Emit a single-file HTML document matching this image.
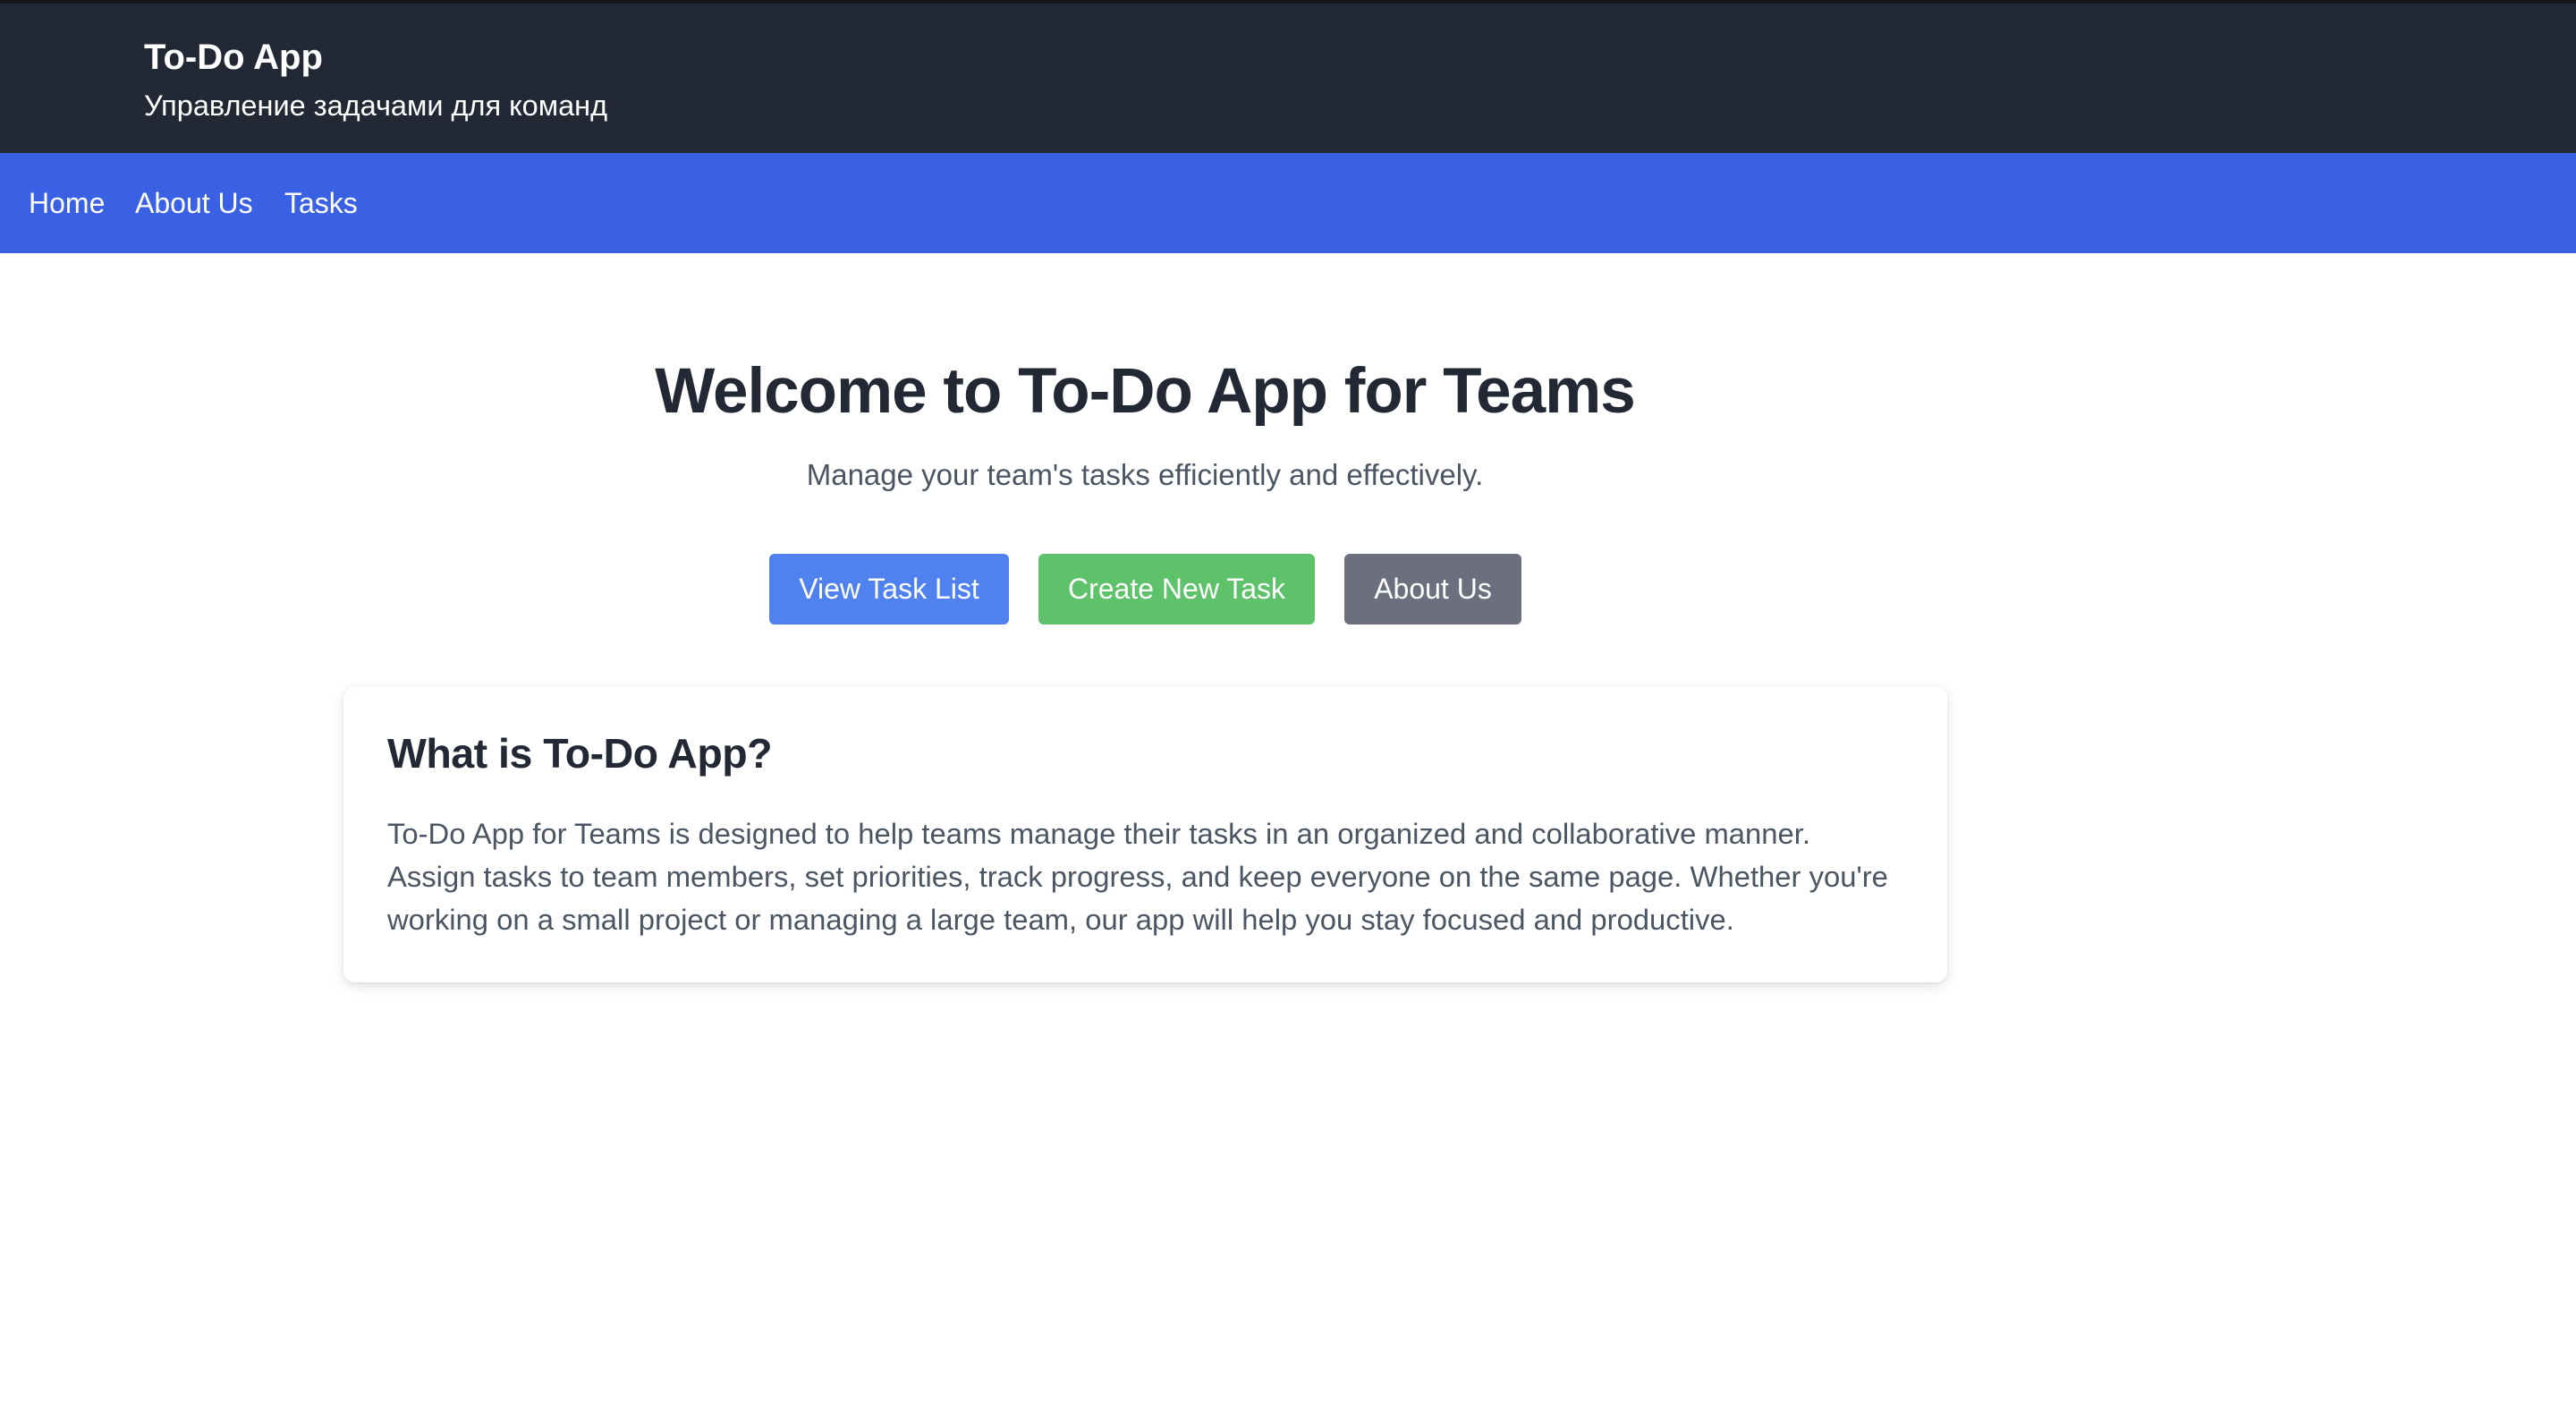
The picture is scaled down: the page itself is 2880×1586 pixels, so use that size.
<!DOCTYPE html>
<html><head><meta charset="utf-8"><style>
*{margin:0;padding:0;box-sizing:border-box}
body{width:2880px;height:1586px;background:#fff;font-family:"Liberation Sans","Noto Sans CJK SC",sans-serif;overflow:hidden;position:relative}
.hdr{position:absolute;left:0;top:0;width:2880px;height:171px;background:#222834;border-top:4px solid #15171c}
.t1{position:absolute;left:161px;top:38px;font-size:40px;font-weight:bold;color:#fff;letter-spacing:0px}
.t2{position:absolute;left:161px;top:96px;font-size:32.5px;color:#fff}
.nav{position:absolute;left:0;top:171px;width:2880px;height:112px;background:#3a61e3}
.nav span{position:absolute;top:38px;font-size:32px;color:#fff}
h1{position:absolute;left:0;width:2560px;text-align:center;top:397px;font-size:71px;color:#222834;letter-spacing:-1px}
.sub{position:absolute;left:0;width:2560px;text-align:center;top:512px;font-size:33px;color:#4b5563}
.b{position:absolute;top:619px;height:79px;border-radius:6px;color:#fff;font-size:32px;line-height:79px;text-align:center}
.card{position:absolute;left:384px;top:768px;width:1793px;height:330px;border-radius:12px;background:#fff;box-shadow:0 4px 14px rgba(0,0,0,0.12),0 1px 3px rgba(0,0,0,0.06)}
.card h2{position:absolute;left:49px;top:47px;font-size:46.5px;color:#222834;letter-spacing:-0.5px}
.card p{position:absolute;left:49px;top:140px;width:1740px;font-size:32.8px;line-height:48px;color:#4b5563;white-space:nowrap}
</style></head><body>
<div class="hdr"><div class="t1">To-Do App</div><div class="t2">Управление задачами для команд</div></div>
<div class="nav"><span style="left:32px">Home</span><span style="left:151px">About Us</span><span style="left:318px">Tasks</span></div>
<h1>Welcome to To-Do App for Teams</h1>
<div class="sub">Manage your team's tasks efficiently and effectively.</div>
<div class="b" style="left:860px;width:268px;background:#4f82ee">View Task List</div>
<div class="b" style="left:1161px;width:309px;background:#5ec26a">Create New Task</div>
<div class="b" style="left:1503px;width:198px;background:#6c707e">About Us</div>
<div class="card"><h2>What is To-Do App?</h2>
<p>To-Do App for Teams is designed to help teams manage their tasks in an organized and collaborative manner.<br>Assign tasks to team members, set priorities, track progress, and keep everyone on the same page. Whether you're<br>working on a small project or managing a large team, our app will help you stay focused and productive.</p></div>
</body></html>
